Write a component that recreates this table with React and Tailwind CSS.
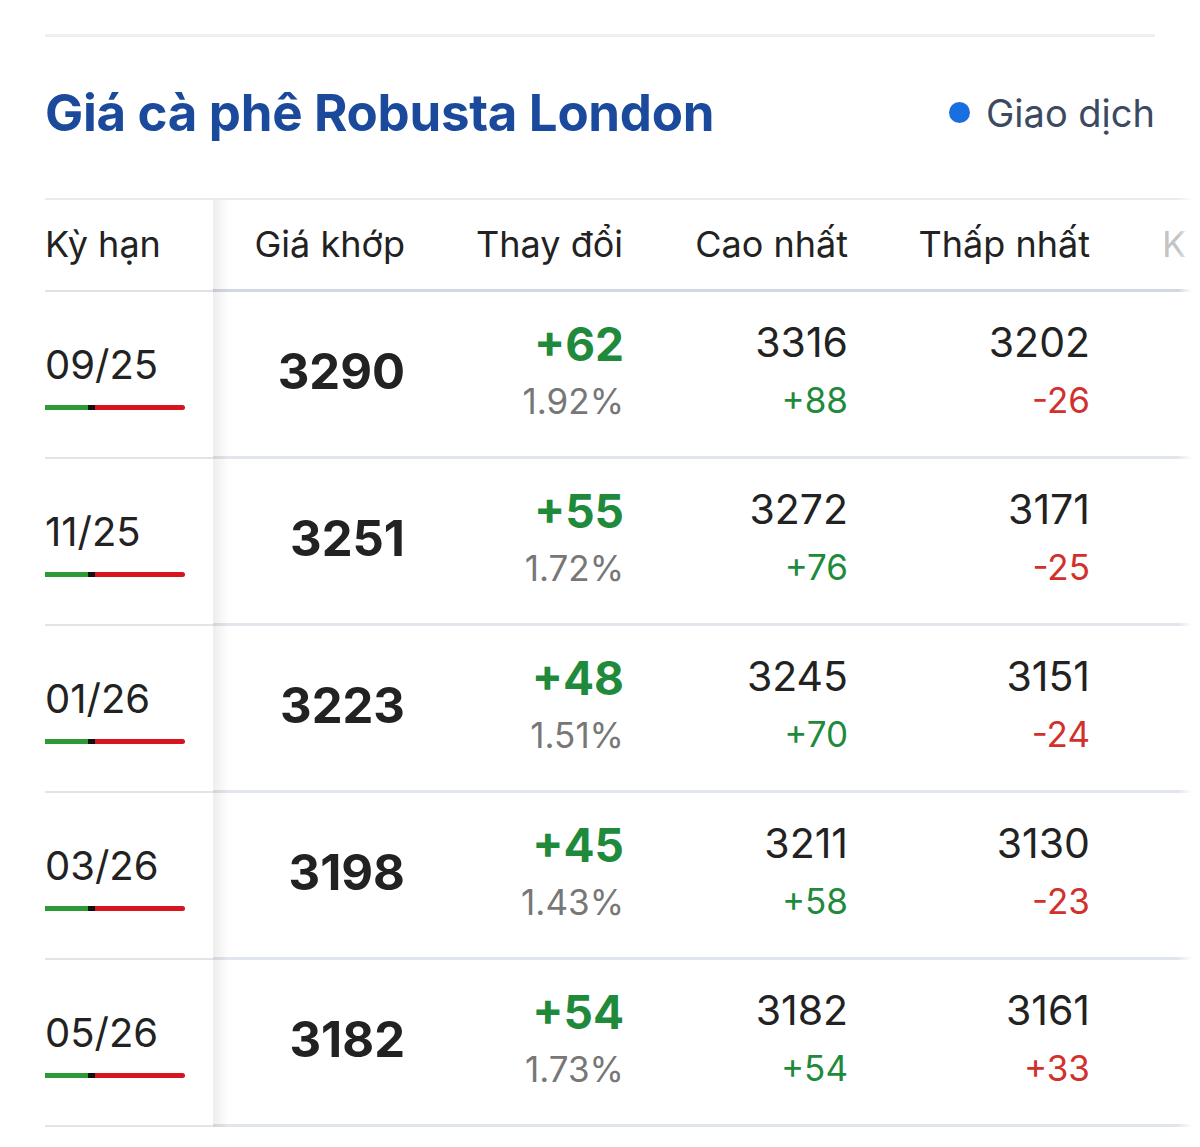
import React from "react";

const rows = [
  { term: "09/25", price: "3290", chg: "+62", pct: "1.92%", hi: "3316", hiC: "+88", lo: "3202", loC: "-26" },
  { term: "11/25", price: "3251", chg: "+55", pct: "1.72%", hi: "3272", hiC: "+76", lo: "3171", loC: "-25" },
  { term: "01/26", price: "3223", chg: "+48", pct: "1.51%", hi: "3245", hiC: "+70", lo: "3151", loC: "-24" },
  { term: "03/26", price: "3198", chg: "+45", pct: "1.43%", hi: "3211", hiC: "+58", lo: "3130", loC: "-23" },
  { term: "05/26", price: "3182", chg: "+54", pct: "1.73%", hi: "3182", hiC: "+54", lo: "3161", loC: "+33" },
];

function Bar() {
  return (
    <div className="flex h-[5px] w-[140px] mt-[20px]">
      <div className="w-[43px] bg-[#2e9a35]" />
      <div className="w-[7px] bg-[#111]" />
      <div className="flex-1 bg-[#d8141f] rounded-r-full" />
    </div>
  );
}

export default function App() {
  return (
    <div className="w-[1200px] h-[1147px] bg-white overflow-hidden font-['Inter','Liberation_Sans',sans-serif] text-[#222]">
      <div className="px-[45px] pt-[34px]">
        <div className="h-[3px] bg-[#efefef]" />
        <div className="flex items-center justify-between h-[161px] pb-[10px]">
          <h1 className="text-[51px] font-bold text-[#1b4a9d] tracking-[-0.3px] leading-none">
            Giá cà phê Robusta London
          </h1>
          <div className="flex items-center gap-[16px] text-[38px] text-[#3c4a61] leading-none">
            <span className="w-[21px] h-[21px] rounded-full bg-[#1a6fe0]" />
            <span>Giao dịch</span>
          </div>
        </div>
      </div>

      <div className="relative ml-[45px] w-[1147px] overflow-hidden">
        <div className="h-[2px] bg-[#ebebeb]" />
        {/* header */}
        <div className="flex h-[92px] text-[36px] leading-none">
          <div className="w-[168px] shrink-0 flex items-center border-b-2 border-[#e2e2e2] pb-[2px]">Kỳ hạn</div>
          <div className="flex flex-1 border-b-[3px] border-[#d2d7e0]">
            <div className="w-[220px] shrink-0 flex items-center justify-end pr-[28px] pb-[2px]">Giá khớp</div>
            <div className="w-[218px] shrink-0 flex items-center justify-end pr-[28px] pb-[2px]">Thay đổi</div>
            <div className="w-[225px] shrink-0 flex items-center justify-end pr-[28px] pb-[2px]">Cao nhất</div>
            <div className="w-[242px] shrink-0 flex items-center justify-end pr-[28px] pb-[2px]">Thấp nhất</div>
            <div className="w-[120px] shrink-0 flex items-center pl-[44px] pb-[2px] text-[#c4c4c4]">K</div>
          </div>
        </div>
        {rows.map((r) => (
          <div key={r.term} className="flex h-[167px]">
            <div className="w-[168px] shrink-0 flex flex-col justify-center border-b-2 border-[#e4e4e4] pt-[6px]">
              <div className="text-[40px] leading-none text-[#222]">{r.term}</div>
              <Bar />
            </div>
            <div className="flex flex-1 border-b-[3px] border-[#e1e5ec]">
              <div className="w-[220px] shrink-0 flex items-center justify-end pr-[28px] text-[49px] font-bold leading-none pb-[6px]">
                {r.price}
              </div>
              <div className="w-[218px] shrink-0 flex flex-col items-end justify-center pr-[27px] pb-[8px]">
                <div className="text-[46px] font-bold text-[#1f8a3b] leading-none">{r.chg}</div>
                <div className="text-[35px] text-[#777] leading-none mt-[17px]">{r.pct}</div>
              </div>
              <div className="w-[225px] shrink-0 flex flex-col items-end justify-center pr-[28px] pb-[8px]">
                <div className="text-[41px] text-[#222] leading-none">{r.hi}</div>
                <div className="text-[35px] text-[#1f8a3b] leading-none mt-[20px]">{r.hiC}</div>
              </div>
              <div className="w-[242px] shrink-0 flex flex-col items-end justify-center pr-[28px] pb-[8px]">
                <div className="text-[41px] text-[#222] leading-none">{r.lo}</div>
                <div className="text-[35px] text-[#d2302c] leading-none mt-[20px]">{r.loC}</div>
              </div>
              <div className="w-[120px] shrink-0" />
            </div>
          </div>
        ))}
        {/* sticky column shadow */}
        <div className="absolute top-[2px] bottom-0 left-[168px] w-[16px] bg-gradient-to-r from-[rgba(0,0,0,0.07)] to-transparent" />
        {/* right fade */}
        <div className="absolute top-0 bottom-0 right-0 w-[14px] bg-gradient-to-r from-transparent to-white" />
      </div>
    </div>
  );
}
